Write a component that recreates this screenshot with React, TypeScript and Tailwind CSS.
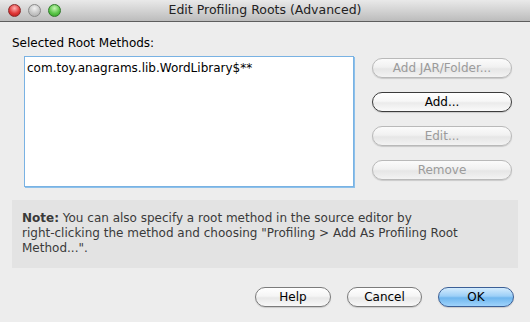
import React from "react"

type BtnProps = {
  label: string
  width: string
  disabled?: boolean
  dark?: boolean
  primary?: boolean
}

function AquaButton({ label, width, disabled, dark, primary }: BtnProps) {
  const tone = primary
    ? "border-[#3b5f96] bg-[linear-gradient(to_bottom,#d3ebfd_0%,#9ccff7_45%,#6fb6ee_55%,#9fd3fb_100%)] text-black"
    : disabled
      ? "border-[#b9b9b9] bg-[linear-gradient(to_bottom,#fbfbfb_0%,#f1f1f1_45%,#e6e6e6_55%,#f3f3f3_100%)] text-[#9b9b9b]"
      : dark
        ? "border-[#3c3c3c] bg-[linear-gradient(to_bottom,#ffffff_0%,#f7f7f7_45%,#ebebeb_55%,#fafafa_100%)] text-black"
        : "border-[#7b7b7b] bg-[linear-gradient(to_bottom,#ffffff_0%,#f5f5f5_45%,#e8e8e8_55%,#f8f8f8_100%)] text-black"
  return (
    <div
      className={`${width} h-[20px] rounded-full border flex items-center justify-center text-[12px] leading-none shadow-[0_1px_1px_rgba(0,0,0,0.15)] ${tone}`}
    >
      {label}
    </div>
  )
}

function Light({ color }: { color: string }) {
  return <div className={`w-[13px] h-[13px] rounded-full border ${color}`} />
}

export default function App() {
  return (
    <div className="w-[530px] h-[322px] bg-[#ededed] flex flex-col font-['DejaVu_Sans',sans-serif] text-black overflow-hidden">
      {/* title bar */}
      <div className="h-[22px] grid grid-cols-[70px_1fr_70px] items-center border-b border-[#5e5e5e] bg-[linear-gradient(to_bottom,#e9e9e9,#d3d3d3_50%,#bcbcbc)]">
        <div className="flex items-center gap-[7px] pl-[8px]">
          <Light color="border-[#8a2a2a] bg-[radial-gradient(circle_at_50%_30%,#ffb3b3,#e03a3a_55%,#b01414)]" />
          <Light color="border-[#8a8a8a] bg-[radial-gradient(circle_at_50%_30%,#f2f2f2,#c6c6c6_55%,#a9a9a9)]" />
          <Light color="border-[#2f7a2a] bg-[radial-gradient(circle_at_50%_30%,#c8f5b5,#5cc64a_55%,#2f9a22)]" />
        </div>
        <div className="text-center text-[12.5px] text-[#222]">Edit Profiling Roots (Advanced)</div>
        <div />
      </div>

      {/* body */}
      <div className="px-[12px] pt-[14px]">
        <div className="text-[12px] leading-[15px]">Selected Root Methods:</div>
        <div className="flex mt-[5px]">
          <div className="ml-[12px] w-[330px] h-[131px] bg-white border border-[#79b2e3] shadow-[1px_1px_0_#8cc0ea] px-[2px] pt-[4px]">
            <div className="text-[12px] leading-[15px]">com.toy.anagrams.lib.WordLibrary$**</div>
          </div>
          <div className="ml-[18px] pt-[2px] flex flex-col gap-[14px]">
            <AquaButton label="Add JAR/Folder..." width="w-[140px]" disabled />
            <AquaButton label="Add..." width="w-[140px]" dark />
            <AquaButton label="Edit..." width="w-[140px]" disabled />
            <AquaButton label="Remove" width="w-[140px]" disabled />
          </div>
        </div>
        <div className="mt-[13px] h-[68px] bg-[#e3e3e3] pl-[10px] pt-[11px] text-[12px] leading-[15px] text-[#3a3a3a] whitespace-nowrap">
          <div>
            <b>Note:</b> You can also specify a root method in the source editor by
          </div>
          <div>right-clicking the method and choosing "Profiling &gt; Add As Profiling Root</div>
          <div>Method...".</div>
        </div>
        <div className="flex justify-end gap-[16px] mt-[19px] pr-[4px]">
          <AquaButton label="Help" width="w-[76px]" />
          <AquaButton label="Cancel" width="w-[75px]" />
          <AquaButton label="OK" width="w-[76px]" primary />
        </div>
      </div>
    </div>
  )
}
